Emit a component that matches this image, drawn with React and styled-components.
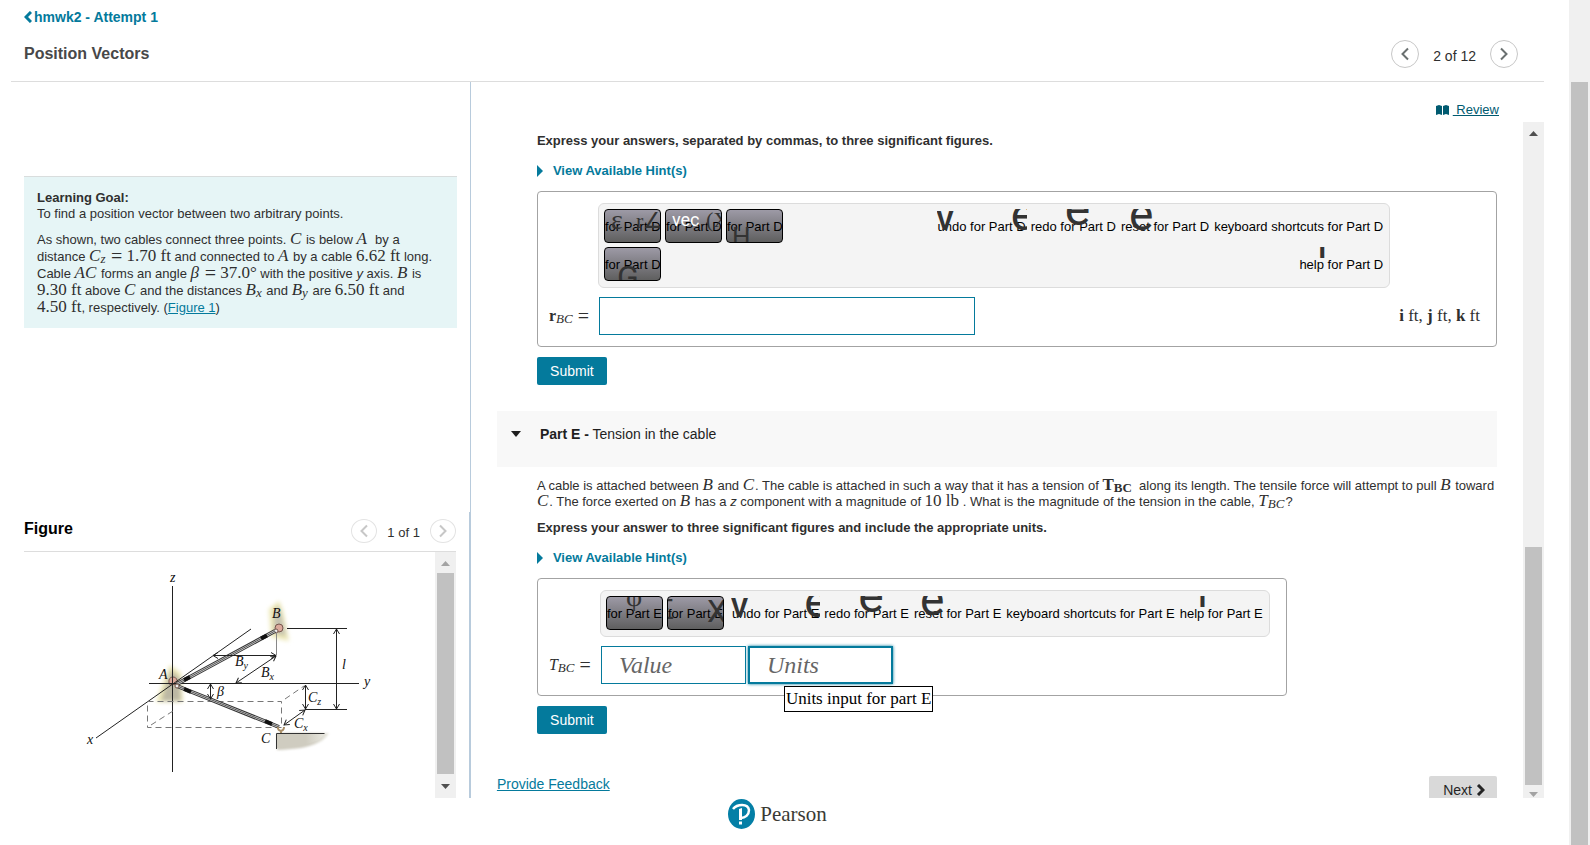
import React from 'react';
import styled, { createGlobalStyle, css } from 'styled-components';

const GlobalStyle = createGlobalStyle`
    * { box-sizing: border-box; }
    body {
        margin: 0;
        background: #fff;
        color: #2f2f2f;
        font-family: "Liberation Sans", Arial, sans-serif;
        font-size: 13px;
        line-height: 16px;
    }
    button, input { font-family: inherit; margin: 0; }
    p, h1, h2 { margin: 0; }
`;

const ScrollBar = ({before, thumb, after, upOff, downOff, end = 21})=>{
    return (
        <Track aria-hidden="true">
            <Arrow viewBox="0 0 21 21"><path d="M6 14h9l-4.500-5z" fill={upOff ? '#a3a3a3' : '#505050'}/></Arrow>
            <Space $grow={before}/>
            <Thumb $grow={thumb}/>
            <Space $grow={after}/>
            <Arrow viewBox={`0 0 21 ${end}`}><path d="M6 7h9l-4.500 5z" fill={downOff ? '#a3a3a3' : '#505050'}/></Arrow>
        </Track>
    )
}

const Chevron = ({next})=>(
    <svg width="10" height="14" viewBox="0 0 10 14" fill="none" stroke="currentColor" strokeWidth="2" aria-hidden="true">
        <path d={next ? 'M2 1.500l5.500 5.500l-5.500 5.500' : 'M8 1.500l-5.500 5.500l5.500 5.500'}/>
    </svg>
)

const Hint = ()=>(
    <HintButton type="button">
        <svg width="6" height="12" viewBox="0 0 6 12" aria-hidden="true"><path d="M0 0l6 6l-6 6z" fill="currentColor"/></svg>
        View Available Hint(s)
    </HintButton>
)

// a leftover icon glyph which is cut off by its own small window
const Icon = ({glyph, x, w, h, size, line, serif, bold, white})=>(
    <Glyph aria-hidden="true" $x={x} $w={w} $h={h} $size={size} $line={line} $serif={serif} $bold={bold} $white={white}>{glyph}</Glyph>
)

const Tools = ({part})=>{
    const d = part === 'D';
    return (
        <ToolGroup $wrap={d}>
            <Tool type="button">undo for Part {part}<Icon glyph="V" x={-1} w={18} h={22} size={26} line={24} bold/></Tool>
            <Tool type="button">redo for Part {part}<Icon glyph="e" x={-20} w={16} h={22} size={46} line={10}/><Icon glyph="e" x={34} w={27} h={18} size={48} line={0}/></Tool>
            <Tool type="button">reset for Part {part}<Icon glyph="e" x={d ? 8 : 6} w={25} h={22} size={46} line={d ? 10 : 6}/></Tool>
            <Tool type="button">keyboard shortcuts for Part {part}</Tool>
            <Tool type="button">help for Part {part}<Icon glyph="l" x={19} w={10} h={13} size={28} line={4} bold/></Tool>
        </ToolGroup>
    )
}

const Figure = ()=>(
    <Drawing viewBox="80 552 300 240" width="300" height="240" role="img" aria-label="Cables AB and AC between three points">
        <defs>
            <filter id="soft" x="-30%" y="-30%" width="160%" height="160%"><feGaussianBlur stdDeviation="2"/></filter>
            <linearGradient id="shelf" x1="0" x2="1" y1="0" y2="0">
                <stop offset="0.600" stopColor="#cfccc0"/>
                <stop offset="1" stopColor="#e9e8e0"/>
            </linearGradient>
            <marker id="tip" viewBox="0 0 8 8" refX="7" refY="4" markerWidth="8" markerHeight="8" markerUnits="userSpaceOnUse" orient="auto-start-reverse">
                <path d="M2 1l5 3l-5 3" fill="none" stroke="#222"/>
            </marker>
        </defs>
        <g filter="url(#soft)">
            <path d="M170 665l11 8l2 29h-27l8-22z" fill="#ece7b4"/>
            <path d="M171 670l9 8l1 23h-20l6-20z" fill="#bcb8a4"/>
            <path d="M279 601l4 10l6 30l-18-4l-2-28z" fill="#ece7b4"/>
            <path d="M278 605l4 12l4 19l-12-3v-20z" fill="#c4c1b0"/>
        </g>
        <path d="M277 733h52c-5 9-17 16-52 17z" fill="url(#shelf)" filter="blur(1px)"/>
        <path d="M277 733h48l-6 7l-18 6l-24 2z" fill="url(#shelf)"/>
        <path d="M276.500 749v-15.500h48" stroke="#333" fill="none"/>
        <g fill="#dba99b" stroke="#76574c">
            <path d="M169 684v-4c1-4 7-4 8 0l2 5z"/>
            <circle cx="279" cy="628" r="4"/>
            <circle cx="276" cy="631" r="2" fill="#eee"/>
        </g>
        <g stroke="#222" fill="none">
            <path d="M172.500 586v186M149 683.500h210M251 629l-155 109"/>
            <path d="M287 628.500h60M305 709.500h42"/>
        </g>
        <path d="M276.500 633v22" stroke="#888"/>
        <g stroke="#777" fill="none" strokeDasharray="6 4">
            <path d="M147.500 701.500h134v26h-134zM151 725l22-14M285 699l19-13"/>
        </g>
        <g stroke="#333" strokeWidth="4"><path d="M177 684l98-53M177 686l102 41"/></g>
        <g stroke="#ddd" strokeWidth="2"><path d="M177 684l98-53M177 686l102 41"/></g>
        <g stroke="#555"><path d="M177 684l98-53M177 686l102 41"/></g>
        <g stroke="#111" strokeWidth="4"><path d="M184 680l6-3M261 638.500l6-3M184 689l7 3M265 721l7 3"/></g>
        <path d="M278 727c-1 4 6 6 6 0M281 730v3" stroke="#a98e66" fill="none" strokeWidth="2"/>
        <circle cx="177" cy="686" r="2" fill="#eee" stroke="#76574c"/>
        <g stroke="#222" fill="none">
            <path d="M213 655.500h63" markerStart="url(#tip)" markerEnd="url(#tip)"/>
            <path d="M276 656l-40 27" markerStart="url(#tip)" markerEnd="url(#tip)"/>
            <path d="M336.500 629v80" markerStart="url(#tip)" markerEnd="url(#tip)"/>
            <path d="M305.500 685v24" markerStart="url(#tip)" markerEnd="url(#tip)"/>
            <path d="M305 710l-21 15" markerStart="url(#tip)" markerEnd="url(#tip)"/>
            <path d="M210.500 684v15" markerStart="url(#tip)" markerEnd="url(#tip)"/>
        </g>
        <g fontFamily="Liberation Serif, serif" fontStyle="italic" fontSize="14" fill="#111">
            <text x="170" y="582">z</text>
            <text x="159" y="679">A</text>
            <text x="272" y="618">B</text>
            <text x="261" y="743">C</text>
            <text x="87" y="744">x</text>
            <text x="364" y="686">y</text>
            <text x="342" y="669">l</text>
            <text x="217" y="696">β</text>
            <text x="235" y="666">B<tspan fontSize="10" dy="3">y</tspan></text>
            <text x="261" y="677">B<tspan fontSize="10" dy="3">x</tspan></text>
            <text x="308" y="702">C<tspan fontSize="10" dy="3">z</tspan></text>
            <text x="294" y="728">C<tspan fontSize="10" dy="3">x</tspan></text>
        </g>
    </Drawing>
)

export default function App() {
    return (
        <Page>
            <GlobalStyle/>
            <Main>
                <Header>
                    <div>
                        <BackLink href="#assignment">
                            <svg width="8" height="12" viewBox="0 0 8 12" fill="none" stroke="currentColor" strokeWidth="3" aria-hidden="true"><path d="M7 1l-5 5l5 5"/></svg>
                            hmwk2 - Attempt 1
                        </BackLink>
                        <Title>Position Vectors</Title>
                    </div>
                    <Pager>
                        <RoundButton type="button" aria-label="Previous item"><Chevron/></RoundButton>
                        <PagerText>2 of 12</PagerText>
                        <RoundButton type="button" aria-label="Next item"><Chevron next/></RoundButton>
                    </Pager>
                </Header>

                <Columns>
                    <Left>
                        <GoalPane>
                            <Goal>
                                <b>Learning Goal:</b>
                                <p>To find a position vector between two arbitrary points.</p>
                                <GoalText>
                                    As shown, two cables connect three points. <Var>C</Var> is below <Var>A</Var>&nbsp; by a<br/>
                                    distance <Var>C<sub>z</sub></Var> <Num><Equals>=</Equals> 1.70 ft</Num> and connected to <Var>A</Var> by a cable <Num>6.62 ft</Num> long.<br/>
                                    Cable <Var>AC</Var> forms an angle <Var>β</Var> <Num><Equals>=</Equals> 37.0°</Num> with the positive <i>y</i> axis. <Var>B</Var> is<br/>
                                    <Num>9.30 ft</Num> above <Var>C</Var> and the distances <Var>B<sub>x</sub></Var> and <Var>B<sub>y</sub></Var> are <Num>6.50 ft</Num> and<br/>
                                    <Num>4.50 ft</Num>, respectively. (<Link href="#figure">Figure 1</Link>)
                                </GoalText>
                            </Goal>
                        </GoalPane>
                        <FigurePane id="figure">
                            <FigureHead>
                                <FigureTitle>Figure</FigureTitle>
                                <FigurePager>
                                    <RoundButton type="button" aria-label="Previous figure" disabled $small><Chevron/></RoundButton>
                                    <PagerText $small>1 of 1</PagerText>
                                    <RoundButton type="button" aria-label="Next figure" disabled $small><Chevron next/></RoundButton>
                                </FigurePager>
                            </FigureHead>
                            <FigureBody>
                                <DrawingPane><Figure/></DrawingPane>
                                <ScrollBar before={0} thumb={201} after={3} upOff/>
                            </FigureBody>
                        </FigurePane>
                    </Left>

                    <Right>
                        <ReviewRow>
                            <ReviewLink href="#review">
                                <svg width="13" height="10" viewBox="0 0 13 10" aria-hidden="true"><path d="M0 1l3-1l3 1v9l-3-1l-3 1zM7 1l3-1l3 1v9l-3-1l-3 1z" fill="currentColor"/></svg>
                                <u>&nbsp;Review</u>
                            </ReviewLink>
                        </ReviewRow>
                        <Scroller>
                            <Content>
                                <Section>
                                    <Instruction>Express your answers, separated by commas, to three significant figures.</Instruction>
                                    <Hint/>
                                    <AnswerBox>
                                        <Toolbar>
                                            <KeyGroup>
                                                <KeyButton type="button">for Part D<Icon glyph="ε" x={6} w={16} h={24} size={28} line={20} serif/><Icon glyph="r∠θ" x={31} w={25} h={22} size={22} line={22} serif/></KeyButton>
                                                <KeyButton type="button">for Part D<Icon glyph="vec" x={6} w={30} h={17} size={18} line={20} white/><Icon glyph="(X" x={40} w={16} h={24} size={22} line={20} serif/></KeyButton>
                                                <KeyButton type="button">for Part D<Icon glyph="H" x={5} w={24} h={32} size={26} line={54}/></KeyButton>
                                                <KeyButton type="button">for Part D<Icon glyph="G" x={12} w={24} h={32} size={32} line={58}/></KeyButton>
                                            </KeyGroup>
                                            <Tools part="D"/>
                                        </Toolbar>
                                        <AnswerLabel htmlFor="answer-d"><b>r</b><sub>BC</sub> <Equals>=</Equals></AnswerLabel>
                                        <LongAnswer id="answer-d" type="text"/>
                                        <UnitText><b>i</b> ft, <b>j</b> ft, <b>k</b> ft</UnitText>
                                    </AnswerBox>
                                    <Submit type="button">Submit</Submit>
                                </Section>

                                <PartHeader type="button">
                                    <svg width="10" height="6" viewBox="0 0 10 6" aria-hidden="true"><path d="M0 0h10l-5 6z" fill="currentColor"/></svg>
                                    <span><b>Part E -</b> Tension in the cable</span>
                                </PartHeader>

                                <Section>
                                    <Question>
                                        A cable is attached between <Var>B</Var> and <Var>C</Var>. The cable is attached in such a way that it has a tension of <Num><b>T<sub>BC</sub></b></Num>&nbsp; along its length. The tensile force will attempt to pull <Var>B</Var> toward <Var>C</Var>. The force exerted on <Var>B</Var> has a <i>z</i> component with a magnitude of <Num>10 lb</Num> . What is the magnitude of the tension in the cable, <Var>T<sub>BC</sub></Var>?
                                    </Question>
                                    <Instruction>Express your answer to three significant figures and include the appropriate units.</Instruction>
                                    <Hint/>
                                    <AnswerBox $fit>
                                        <Toolbar>
                                            <KeyGroup>
                                                <KeyButton type="button">for Part E<Icon glyph="φ" x={19} w={18} h={14} size={28} line={0} serif/></KeyButton>
                                                <KeyButton type="button">for Part E<Icon glyph="Σ" x={-10} w={16} h={27} size={28} line={26}/><Icon glyph="X" x={39} w={17} h={28} size={32} line={28}/></KeyButton>
                                            </KeyGroup>
                                            <Tools part="E"/>
                                        </Toolbar>
                                        <AnswerLabel htmlFor="value-e"><i>T</i><sub>BC</sub> <Equals>=</Equals></AnswerLabel>
                                        <Pair>
                                            <Answer id="value-e" type="text" placeholder="Value"/>
                                            <UnitsField>
                                                <Answer type="text" placeholder="Units" aria-label="Units input for part E" $focus/>
                                                <Tooltip role="tooltip">Units input for part E</Tooltip>
                                            </UnitsField>
                                        </Pair>
                                    </AnswerBox>
                                    <Submit type="button">Submit</Submit>
                                </Section>

                                <EndRow>
                                    <Feedback href="#feedback">Provide Feedback</Feedback>
                                    <NextButton type="button">
                                        Next
                                        <svg width="9" height="12" viewBox="0 0 9 12" fill="none" stroke="currentColor" strokeWidth="3" aria-hidden="true"><path d="M2 1l5 5l-5 5"/></svg>
                                    </NextButton>
                                </EndRow>
                            </Content>
                            <ScrollBar before={404} thumb={238} after={0} downOff end={13}/>
                        </Scroller>
                    </Right>
                </Columns>

                <Footer>
                    <svg width="27" height="30" viewBox="0 0 27 30" aria-hidden="true">
                        <ellipse cx="13.500" cy="15" rx="13.500" ry="15" fill="#047fa6"/>
                        <path d="M5 10c4-5 15-6 16 1c0 5-4 8-8 8" fill="none" stroke="#fff" strokeWidth="2.500"/>
                        <path d="M11 10l3-1v12h-3zM11 22.500h3v3h-3z" fill="#fff"/>
                    </svg>
                    Pearson
                </Footer>
            </Main>
            <PageScroll aria-hidden="true"><PageThumb/></PageScroll>
        </Page>
    )
}

const Page = styled.div`
    display: flex;
    height: 100vh;
    overflow: hidden;
`;

const Main = styled.div`
    flex: 1;
    min-width: 0;
    display: flex;
    flex-direction: column;
    padding: 0 25px 0 11px;
`;

const PageScroll = styled.div`
    width: 21px;
    padding: 82px 2px 0;
    background: #f0f0f0;
`;

const PageThumb = styled.div`
    height: 100%;
    background: #c1c1c1;
`;

const Header = styled.header`
    display: flex;
    justify-content: space-between;
    height: 82px;
    padding: 9px 26px 0 13px;
    border-bottom: 1px solid #ddd;
`;

const BackLink = styled.a`
    display: flex;
    align-items: center;
    gap: 2px;
    color: #047a9c;
    font-size: 14px;
    font-weight: bold;
    text-decoration: none;
`;

const Title = styled.h1`
    padding-top: 19px;
    color: #484848;
    font-size: 16px;
    line-height: 20px;
`;

const Pager = styled.nav`
    display: flex;
    align-items: center;
    gap: 14px;
    height: 28px;
    margin-top: 31px;
`;

const PagerText = styled.span`
    padding-top: 4px;
    font-size: ${({$small})=> $small ? 13 : 14}px;
`;

const RoundButton = styled.button`
    display: flex;
    align-items: center;
    justify-content: center;
    width: ${({$small})=> $small ? 26 : 28}px;
    height: ${({$small})=> $small ? 24 : 28}px;
    padding: 0;
    border: 1px solid #c7c7c7;
    border-radius: 50%;
    background: #fff;
    color: #6a7070;

    &:disabled {
        border-color: #e3e3e3;
        color: #c7c7c7;
    }
`;

const Columns = styled.div`
    flex: 1;
    min-height: 0;
    display: flex;
`;

const Left = styled.aside`
    width: 30%;
    display: flex;
    flex-direction: column;
    border-right: 1px solid #b8cbdc;
`;

const GoalPane = styled.div`
    flex: 1;
    min-height: 0;
    padding: 94px 13px 0;
`;

const Goal = styled.section`
    padding: 13px 13px 12px;
    border-top: 1px solid #d9dddd;
    background: #e6f5f6;
    white-space: nowrap;
`;

const GoalText = styled.p`
    padding-top: 9px;
    line-height: 17px;
`;

const mathFont = css`
    font-family: "Liberation Serif", "Times New Roman", serif;
    font-size: 17px;
    line-height: 14px;

    sub {
        font-size: 13px;
        line-height: 1px;
        vertical-align: -2px;
    }
`;

const Var = styled.i`
    ${mathFont}
    padding-right: 1px;
`;

const Num = styled.span`
    ${mathFont}
    white-space: nowrap;
`;

const Link = styled.a`
    color: #047a9c;
`;

const FigurePane = styled.section`
    height: 40%;
    display: flex;
    flex-direction: column;
    padding: 0 13px;
    border-right: 1px solid #b8cbdc;
`;

const FigureHead = styled.div`
    display: flex;
    justify-content: space-between;
    height: 40px;
    padding-top: 7px;
    border-bottom: 1px solid #ddd;
`;

const FigureTitle = styled.h2`
    color: #000;
    font-size: 16px;
    line-height: 20px;
`;

const FigurePager = styled.nav`
    display: flex;
    align-items: center;
    gap: 10px;
    height: 24px;
`;

const FigureBody = styled.div`
    flex: 1;
    min-height: 0;
    display: flex;
`;

const DrawingPane = styled.div`
    flex: 1;
    padding-left: 56px;
    overflow: hidden;
`;

const Drawing = styled.svg`
    display: block;
`;

const Track = styled.div`
    flex: none;
    display: flex;
    flex-direction: column;
    width: 21px;
    background: #f0f0f0;
`;

const Arrow = styled.svg`
    flex: none;
    display: block;
    width: 21px;
`;

const Space = styled.div`
    flex: ${({$grow})=> $grow} 0 0px;
`;

const Thumb = styled.div`
    flex: ${({$grow})=> $grow} 0 0px;
    margin: 0 2px;
    background: #c1c1c1;
`;

const Right = styled.main`
    flex: 1;
    min-width: 0;
    display: flex;
    flex-direction: column;
`;

const ReviewRow = styled.div`
    display: flex;
    justify-content: flex-end;
    height: 40px;
    padding: 20px 45px 0 0;
`;

const ReviewLink = styled.a`
    display: flex;
    align-items: center;
    gap: 4px;
    height: 16px;
    color: #005a70;
    text-decoration: none;
`;

const Scroller = styled.div`
    flex: 1;
    min-height: 0;
    display: flex;
`;

const Content = styled.div`
    flex: 1;
    min-width: 0;
    padding: 11px 26px 0;
    overflow: hidden;
`;

const Section = styled.section`
    padding-left: 40px;
`;

const Instruction = styled.p`
    font-weight: bold;
`;

const HintButton = styled.button`
    display: flex;
    align-items: center;
    gap: 10px;
    padding: 0;
    margin: 14px 0 12px;
    border: 0;
    background: none;
    color: #047a9c;
    font-size: 13px;
    font-weight: bold;
    line-height: 16px;
`;

const AnswerBox = styled.div`
    display: grid;
    grid-template-columns: ${({$fit})=> $fit ? '51px auto' : '49px 1fr auto'};
    align-items: center;
    row-gap: 9px;
    width: ${({$fit})=> $fit ? 'fit-content' : 'auto'};
    padding: 11px 16px 11px 11px;
    border: 1px solid #a3a3a3;
    border-radius: 4px;
`;

const Toolbar = styled.div`
    grid-column: 2;
    display: flex;
    justify-content: space-between;
    padding: 5px 6px 6px 5px;
    border: 1px solid #dcdcdc;
    border-radius: 6px;
    background: #f4f4f4;
`;

const KeyGroup = styled.div`
    display: flex;
    flex-wrap: wrap;
    gap: 4px;
    max-width: 200px;
`;

const ToolGroup = styled.div`
    display: flex;
    flex-wrap: ${({$wrap})=> $wrap ? 'wrap' : 'nowrap'};
    justify-content: flex-end;
    gap: 4px 5px;
    max-width: ${({$wrap})=> $wrap ? '500px' : 'none'};
    padding-left: 8px;
`;

const Tool = styled.button`
    position: relative;
    height: 34px;
    padding: 0;
    border: 0;
    background: none;
    color: #000;
    font-size: 13px;
    white-space: nowrap;
`;

const KeyButton = styled(Tool)`
    width: 57px;
    border: 1px solid #000;
    border-radius: 4px;
    background: linear-gradient(#9d9aa6, #5f5f5f);
    overflow: hidden;
`;

const Glyph = styled.span`
    position: absolute;
    top: 0;
    left: ${({$x})=> $x}px;
    width: ${({$w})=> $w}px;
    height: ${({$h})=> $h}px;
    overflow: hidden;
    color: ${({$white})=> $white ? '#fff' : '#333'};
    font-family: ${({$serif})=> $serif ? '"Liberation Serif", serif' : 'Roboto, sans-serif'};
    font-size: ${({$size})=> $size}px;
    font-weight: ${({$bold})=> $bold ? 'bold' : 'normal'};
    line-height: ${({$line})=> $line}px;
    text-align: left;
`;

const AnswerLabel = styled.label`
    grid-column: 1;
    font-family: "Liberation Serif", "Times New Roman", serif;
    font-size: 16px;
    white-space: nowrap;

    sub {
        font-size: 13px;
        font-style: italic;
        line-height: 1px;
        vertical-align: -2px;
    }
`;

const Equals = styled.span`
    padding-left: 1px;
    font-size: 20px;
    line-height: 1px;
    vertical-align: -2px;
`;

const Answer = styled.input`
    width: 145px;
    height: 38px;
    padding: 0 17px;
    border: ${({$focus})=> $focus ? 2 : 1}px solid #047a9c;
    box-shadow: ${({$focus})=> $focus ? '0 0 3px #047a9c' : 'none'};
    background: #fff;
    font-family: "Liberation Serif", "Times New Roman", serif;
    font-size: 24px;
    outline: 0;

    &::placeholder {
        color: #666;
        font-style: italic;
        opacity: 1;
    }
`;

const LongAnswer = styled(Answer)`
    width: 376px;
    margin-left: 1px;
`;

const UnitText = styled.span`
    padding-left: 9px;
    font-family: "Liberation Serif", "Times New Roman", serif;
    font-size: 17px;
`;

const Pair = styled.div`
    display: flex;
    gap: 2px;
    padding-left: 1px;
`;

const UnitsField = styled.div`
    position: relative;
`;

const Tooltip = styled.span`
    position: absolute;
    top: 40px;
    left: 36px;
    padding: 3px 1px;
    border: 1px solid #000;
    background: #fff;
    color: #000;
    font-family: "Liberation Serif", "Times New Roman", serif;
    font-size: 17px;
    line-height: 18px;
    white-space: nowrap;
`;

const Submit = styled.button`
    display: block;
    width: 70px;
    height: 28px;
    margin-top: 10px;
    padding: 0;
    border: 0;
    border-radius: 2px;
    background: #047a9c;
    color: #fff;
    font-size: 14px;
`;

const PartHeader = styled.button`
    display: flex;
    align-items: flex-start;
    gap: 19px;
    width: 100%;
    height: 56px;
    margin: 26px 0 11px;
    padding: 15px 14px;
    border: 0;
    background: #f8f8f8;
    color: #1f1f1f;
    font-size: 14px;
    line-height: 16px;
    text-align: left;

    svg { margin-top: 5px; }
`;

const Question = styled.p`
    padding-bottom: 10px;
`;

const EndRow = styled.div`
    display: flex;
    align-items: flex-start;
    justify-content: space-between;
    padding-top: 42px;
`;

const Feedback = styled(Link)`
    font-size: 14px;
`;

const NextButton = styled.button`
    display: flex;
    align-items: center;
    gap: 4px;
    height: 28px;
    padding: 0 12px 0 14px;
    border: 0;
    border-radius: 2px;
    background: #d9d9d9;
    color: #252525;
    font-size: 14px;
`;

const Footer = styled.footer`
    display: flex;
    align-items: center;
    justify-content: center;
    gap: 5px;
    height: 47px;
    padding-bottom: 15px;
    color: #3a3a34;
    font-family: "Liberation Serif", "Times New Roman", serif;
    font-size: 21px;
`;
